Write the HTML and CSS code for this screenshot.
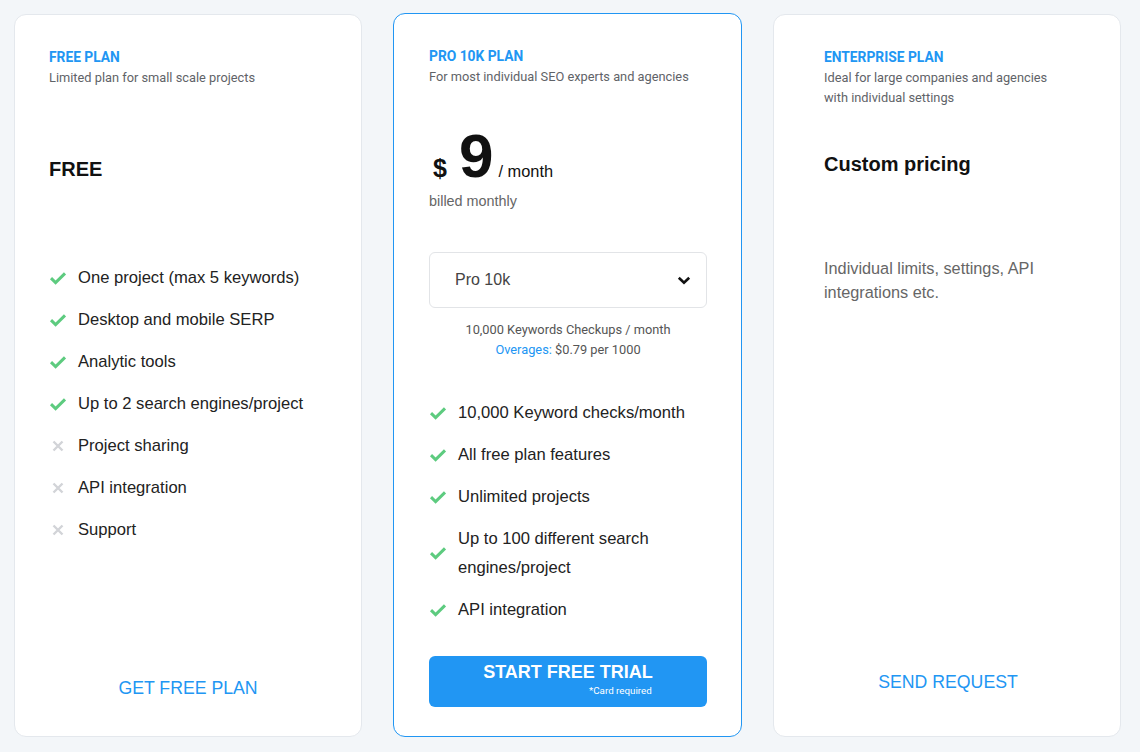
FILE: index.html
```html
<!DOCTYPE html>
<html>
<head>
<meta charset="utf-8">
<link rel="stylesheet" href="styles.css">
</head>
<body>
<div class="pricing">
  <div class="card card-free">
    <div class="plan-label">FREE PLAN</div>
    <div class="plan-sub">Limited plan for small scale projects</div>
    <div class="price-free">FREE</div>
    <ul class="features features-free">
      <li class="yes"><svg class="ico" viewBox="0 0 18 14"><path d="M2 7.2 L6.6 11.6 L16 2.4" fill="none" stroke="#5dcb7f" stroke-width="3"/></svg><span>One project (max 5 keywords)</span></li>
      <li class="yes"><svg class="ico" viewBox="0 0 18 14"><path d="M2 7.2 L6.6 11.6 L16 2.4" fill="none" stroke="#5dcb7f" stroke-width="3"/></svg><span>Desktop and mobile SERP</span></li>
      <li class="yes"><svg class="ico" viewBox="0 0 18 14"><path d="M2 7.2 L6.6 11.6 L16 2.4" fill="none" stroke="#5dcb7f" stroke-width="3"/></svg><span>Analytic tools</span></li>
      <li class="yes"><svg class="ico" viewBox="0 0 18 14"><path d="M2 7.2 L6.6 11.6 L16 2.4" fill="none" stroke="#5dcb7f" stroke-width="3"/></svg><span>Up to 2 search engines/project</span></li>
      <li class="no"><svg class="ico" viewBox="0 0 18 14"><path d="M4.5 2.5 L13.5 11.5 M13.5 2.5 L4.5 11.5" fill="none" stroke="#d2d4d8" stroke-width="2.4"/></svg><span>Project sharing</span></li>
      <li class="no"><svg class="ico" viewBox="0 0 18 14"><path d="M4.5 2.5 L13.5 11.5 M13.5 2.5 L4.5 11.5" fill="none" stroke="#d2d4d8" stroke-width="2.4"/></svg><span>API integration</span></li>
      <li class="no"><svg class="ico" viewBox="0 0 18 14"><path d="M4.5 2.5 L13.5 11.5 M13.5 2.5 L4.5 11.5" fill="none" stroke="#d2d4d8" stroke-width="2.4"/></svg><span>Support</span></li>
    </ul>
    <a class="link-btn link-free">GET FREE PLAN</a>
  </div>

  <div class="card card-pro">
    <div class="plan-label">PRO 10K PLAN</div>
    <div class="plan-sub">For most individual SEO experts and agencies</div>
    <div class="price-row">
      <span class="cur">$</span><span class="amount">9</span><span class="per">/ month</span>
    </div>
    <div class="billed">billed monthly</div>
    <div class="select">
      <span>Pro 10k</span>
      <svg class="chev" viewBox="0 0 14 9"><path d="M1.8 1.8 L7 6.8 L12.2 1.8" fill="none" stroke="#111" stroke-width="2.6"/></svg>
    </div>
    <div class="info">
      <div>10,000 Keywords Checkups / month</div>
      <div><span class="blue">Overages:</span> $0.79 per 1000</div>
    </div>
    <ul class="features features-pro">
      <li class="yes"><svg class="ico" viewBox="0 0 18 14"><path d="M2 7.2 L6.6 11.6 L16 2.4" fill="none" stroke="#5dcb7f" stroke-width="3"/></svg><span>10,000 Keyword checks/month</span></li>
      <li class="yes"><svg class="ico" viewBox="0 0 18 14"><path d="M2 7.2 L6.6 11.6 L16 2.4" fill="none" stroke="#5dcb7f" stroke-width="3"/></svg><span>All free plan features</span></li>
      <li class="yes"><svg class="ico" viewBox="0 0 18 14"><path d="M2 7.2 L6.6 11.6 L16 2.4" fill="none" stroke="#5dcb7f" stroke-width="3"/></svg><span>Unlimited projects</span></li>
      <li class="yes"><svg class="ico" viewBox="0 0 18 14"><path d="M2 7.2 L6.6 11.6 L16 2.4" fill="none" stroke="#5dcb7f" stroke-width="3"/></svg><span>Up to 100 different search<br>engines/project</span></li>
      <li class="yes"><svg class="ico" viewBox="0 0 18 14"><path d="M2 7.2 L6.6 11.6 L16 2.4" fill="none" stroke="#5dcb7f" stroke-width="3"/></svg><span>API integration</span></li>
    </ul>
    <a class="trial-btn">
      <span class="trial-inner">
        <span class="trial-title">START FREE TRIAL</span>
        <span class="trial-note">*Card required</span>
      </span>
    </a>
  </div>

  <div class="card card-ent">
    <div class="plan-label">ENTERPRISE PLAN</div>
    <div class="plan-sub">Ideal for large companies and agencies<br>with individual settings</div>
    <div class="price-custom">Custom pricing</div>
    <div class="ent-desc">Individual limits, settings, API<br>integrations etc.</div>
    <a class="link-btn link-ent">SEND REQUEST</a>
  </div>
</div>
</body>
</html>
```

FILE: styles.css
```css
* { box-sizing: border-box; }
html, body { margin: 0; padding: 0; }
body {
  background: #f3f6f9;
  font-family: "Liberation Sans", Arial, sans-serif;
  color: #222;
  width: 1140px;
  height: 752px;
  overflow: hidden;
}
.pricing {
  display: grid;
  grid-template-columns: 348px 349px 348px;
  column-gap: 31px;
  padding: 14px 0 0 14px;
  height: 737px;
}
.card {
  background: #fff;
  border: 1px solid #e4e8ed;
  border-radius: 12px;
  display: flex;
  flex-direction: column;
  padding: 34px 34px 0 34px;
}
.card-pro {
  border-color: #2196f3;
  margin-top: -1px;
  padding: 34px 34px 29px 35px;
}
.card-ent { padding: 34px 48px 42px 50px; }
.card-free { padding-bottom: 36px; }

.plan-label {
  font-family: Roboto, "Liberation Sans", sans-serif;
  font-size: 13.8px;
  font-weight: 700;
  line-height: 16px;
  color: #2196f3;
}
.plan-sub {
  font-family: Roboto, "Liberation Sans", sans-serif;
  font-size: 12.8px;
  line-height: 20px;
  color: #5f6368;
  margin-top: 3px;
}
.price-free {
  font-size: 20px;
  font-weight: 700;
  line-height: 24px;
  color: #111;
  margin-top: 69px;
}
.price-custom {
  font-size: 20px;
  font-weight: 700;
  line-height: 24px;
  color: #111;
  margin-top: 44px;
}
.features {
  list-style: none;
  margin: 0;
  padding: 0;
  display: flex;
  flex-direction: column;
  gap: 13px;
}
.features-free { margin-top: 82px; }
.features-pro { margin-top: 38px; }
.features li {
  display: flex;
  align-items: center;
  font-size: 16.6px;
  line-height: 29px;
  color: #222;
}
.ico {
  width: 18px;
  height: 14px;
  flex: none;
  margin-right: 11px;
}
.link-btn {
  margin-top: auto;
  text-align: center;
  font-size: 17.7px;
  line-height: 24px;
  color: #2196f3;
  cursor: pointer;
}

.price-row {
  display: flex;
  align-items: baseline;
  margin-top: 37px;
  color: #111;
  line-height: 64px;
  height: 64px;
}
.cur { font-size: 25px; font-weight: 700; margin-left: 4px; margin-right: 12px; }
.amount { font-size: 62px; font-weight: 700; margin-right: 5px; }
.per { font-size: 16.4px; }
.billed {
  font-size: 14.4px;
  line-height: 20px;
  color: #666;
  margin-top: 3px;
}
.select {
  margin-top: 41px;
  height: 56px;
  border: 1px solid #e2e4e7;
  border-radius: 6px;
  display: flex;
  align-items: center;
  justify-content: space-between;
  padding: 0 15px 0 25px;
  font-size: 16px;
  color: #444;
}
.chev { width: 14px; height: 9px; }
.info {
  margin-top: 12px;
  text-align: center;
  font-family: Roboto, "Liberation Sans", sans-serif;
  font-size: 12.8px;
  line-height: 20px;
  color: #555;
}
.blue { color: #2196f3; }
.trial-btn {
  margin-top: auto;
  height: 51px;
  background: #2196f3;
  border-radius: 6px;
  display: flex;
  justify-content: center;
  padding-top: 6px;
  color: #fff;
  cursor: pointer;
}
.trial-inner {
  display: flex;
  flex-direction: column;
  align-items: flex-end;
}
.trial-title {
  font-size: 18px;
  font-weight: 700;
  line-height: 20px;
}
.trial-note {
  font-family: Roboto, "Liberation Sans", sans-serif;
  font-size: 9.8px;
  line-height: 12px;
  margin-top: 3px;
  margin-right: 1px;
}
.ent-desc {
  margin-top: 80px;
  font-size: 16.3px;
  line-height: 24px;
  color: #666;
}
```
